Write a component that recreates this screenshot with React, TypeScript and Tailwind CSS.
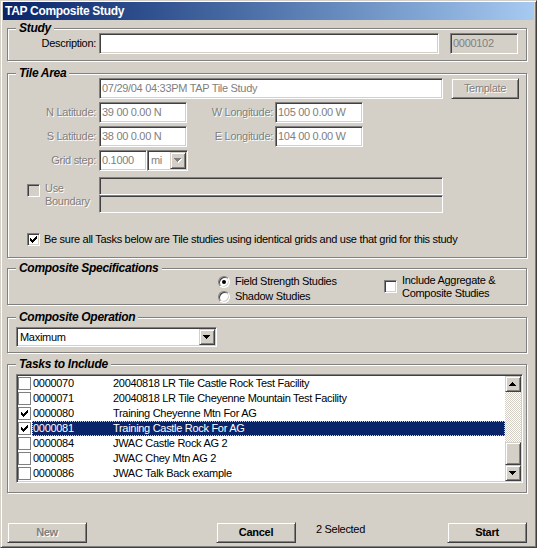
import React from "react";

const SUNKEN =
  "border border-t-[#808080] border-l-[#808080] border-b-white border-r-white shadow-[inset_1px_1px_0_#404040,inset_-1px_-1px_0_#d4d0c8]";
const RAISED =
  "border border-t-[#d4d0c8] border-l-[#d4d0c8] border-b-[#404040] border-r-[#404040] shadow-[inset_1px_1px_0_#ffffff,inset_-1px_-1px_0_#808080] bg-[#d4d0c8]";
const ETCHED =
  "relative border border-[#808080] shadow-[inset_1px_1px_0_#ffffff,1px_1px_0_#ffffff]";
const DIS = "text-[#808080] [text-shadow:1px_1px_0_#ffffff]";

function CheckMark({ color = "#000" }: { color?: string }) {
  return (
    <svg width="7" height="7" viewBox="0 0 7 7" shapeRendering="crispEdges">
      <path
        fill={color}
        d="M0 2h1v3H0zM1 3h1v3H1zM2 4h1v3H2zM3 3h1v3H3zM4 2h1v3H4zM5 1h1v3H5zM6 0h1v3H6z"
      />
    </svg>
  );
}

function Arrow({ up = false, color = "#000", shadow = false }: { up?: boolean; color?: string; shadow?: boolean }) {
  const d = up
    ? "M3 0h1v1H3zM2 1h3v1H2zM1 2h5v1H1zM0 3h7v1H0z"
    : "M0 0h7v1H0zM1 1h5v1H1zM2 2h3v1H2zM3 3h1v1H3z";
  return (
    <svg width="8" height="5" viewBox="0 0 8 5" shapeRendering="crispEdges">
      {shadow && <path fill="#ffffff" d={d} transform="translate(1 1)" />}
      <path fill={color} d={d} />
    </svg>
  );
}

function Check3D({ checked = false, disabled = false }: { checked?: boolean; disabled?: boolean }) {
  return (
    <div
      className={`${SUNKEN} w-[13px] h-[13px] shrink-0 flex items-center justify-center ${
        disabled ? "bg-[#d4d0c8]" : "bg-white"
      }`}
    >
      {checked && <CheckMark />}
    </div>
  );
}

function FlatCheck({ checked = false }: { checked?: boolean }) {
  return (
    <div className="w-[13px] h-[13px] shrink-0 border border-[#808080] bg-white flex items-center justify-center">
      {checked && <CheckMark />}
    </div>
  );
}

function Radio({ checked = false }: { checked?: boolean }) {
  return (
    <div className="w-[12px] h-[12px] shrink-0 rounded-full border border-t-[#808080] border-l-[#808080] border-b-white border-r-white bg-white shadow-[inset_1px_1px_0_#404040,inset_-1px_-1px_0_#d4d0c8] flex items-center justify-center">
      {checked && <div className="w-[4px] h-[4px] rounded-full bg-black" />}
    </div>
  );
}

function Group({
  title,
  className,
  children,
}: {
  title: string;
  className?: string;
  children: React.ReactNode;
}) {
  return (
    <div className={`${ETCHED} ${className ?? ""}`}>
      <span className="absolute left-[8px] -top-[8px] px-[3px] bg-[#d4d0c8] font-bold italic text-[12px] leading-[14px] tracking-[-0.3px] whitespace-nowrap">
        {title}
      </span>
      {children}
    </div>
  );
}

const tasks = [
  { id: "0000070", name: "20040818 LR Tile Castle Rock Test Facility", checked: false, sel: false },
  { id: "0000071", name: "20040818 LR Tile Cheyenne Mountain Test Facility", checked: false, sel: false },
  { id: "0000080", name: "Training Cheyenne Mtn For AG", checked: true, sel: false },
  { id: "0000081", name: "Training Castle Rock For AG", checked: true, sel: true },
  { id: "0000084", name: "JWAC Castle Rock AG 2", checked: false, sel: false },
  { id: "0000085", name: "JWAC Chey Mtn AG 2", checked: false, sel: false },
  { id: "0000086", name: "JWAC Talk Back example", checked: false, sel: false },
];

export default function App() {
  return (
    <div className="w-[537px] h-[548px] bg-[#d4d0c8] border border-t-[#d4d0c8] border-l-[#d4d0c8] border-b-[#404040] border-r-[#404040] shadow-[inset_1px_1px_0_#ffffff,inset_-1px_-1px_0_#808080] pt-[1px] px-[2px] pb-[2px] flex flex-col font-['Liberation_Sans',Arial,sans-serif] text-[11px] leading-[13px] tracking-[-0.3px] text-black overflow-hidden select-none">
      {/* Title bar */}
      <div className="h-[18px] shrink-0 bg-linear-to-r from-[#0a246a] to-[#a6caf0] flex items-center pl-[2px] text-white font-bold text-[12px] tracking-[-0.3px]">
        TAP Composite Study
      </div>

      <div className="flex flex-col pl-[4px] pr-[7px]">
        {/* Study */}
        <Group title="Study" className="mt-[8px] pt-[4px] pb-[6px]">
          <div className="flex items-center h-[21px]">
            <div className="w-[91px] pr-[3px] text-right">Description:</div>
            <div className={`${SUNKEN} bg-white w-[340px] h-[21px]`} />
            <div
              className={`${SUNKEN} bg-[#d4d0c8] w-[68px] h-[21px] ml-[11px] flex items-center pl-[2px] text-[#808080]`}
            >
              0000102
            </div>
          </div>
        </Group>

        {/* Tile Area */}
        <Group title="Tile Area" className="mt-[12px] pt-[4px] pb-[11px]">
          <div className="flex items-center">
            <div
              className={`${SUNKEN} bg-white w-[344px] h-[21px] ml-[91px] flex items-center pl-[2px] text-[#808080]`}
            >
              07/29/04 04:33PM TAP Tile Study
            </div>
            <div className={`${RAISED} w-[68px] h-[21px] ml-[8px] flex items-center justify-center ${DIS}`}>
              Template
            </div>
          </div>

          <div className="flex items-center mt-[3px]">
            <div className={`w-[91px] pr-[3px] text-right ${DIS}`}>N Latitude:</div>
            <div className={`${SUNKEN} bg-white w-[88px] h-[21px] flex items-center pl-[2px] text-[#808080]`}>
              39 00 0.00 N
            </div>
            <div className={`w-[88px] pr-[2px] text-right ${DIS}`}>W Longitude:</div>
            <div className={`${SUNKEN} bg-white w-[88px] h-[21px] flex items-center pl-[2px] text-[#808080]`}>
              105 00 0.00 W
            </div>
          </div>

          <div className="flex items-center mt-[3px]">
            <div className={`w-[91px] pr-[3px] text-right ${DIS}`}>S Latitude:</div>
            <div className={`${SUNKEN} bg-white w-[88px] h-[21px] flex items-center pl-[2px] text-[#808080]`}>
              38 00 0.00 N
            </div>
            <div className={`w-[88px] pr-[2px] text-right ${DIS}`}>E Longitude:</div>
            <div className={`${SUNKEN} bg-white w-[88px] h-[21px] flex items-center pl-[2px] text-[#808080]`}>
              104 00 0.00 W
            </div>
          </div>

          <div className="flex items-center mt-[3px]">
            <div className={`w-[91px] pr-[3px] text-right ${DIS}`}>Grid step:</div>
            <div className={`${SUNKEN} bg-white w-[48px] h-[21px] flex items-center pl-[2px] text-[#808080]`}>
              0.1000
            </div>
            <div className={`${SUNKEN} bg-white w-[41px] h-[21px] p-[1px] flex items-center justify-between`}>
              <span className="pl-[2px] text-[#808080]">mi</span>
              <div className={`${RAISED} w-[16px] h-full flex items-center justify-center`}>
                <Arrow color="#808080" shadow />
              </div>
            </div>
          </div>

          <div className="flex items-start mt-[6px]">
            <div className="w-[91px] flex items-start pl-[19px]">
              <div className="mt-[7px]">
                <Check3D disabled />
              </div>
              <div className={`ml-[5px] mt-[5px] leading-[13px] ${DIS}`}>
                Use
                <br />
                Boundary
              </div>
            </div>
            <div className="flex flex-col">
              <div className={`${SUNKEN} bg-[#d4d0c8] w-[344px] h-[18px]`} />
              <div className={`${SUNKEN} bg-[#d4d0c8] w-[344px] h-[18px]`} />
            </div>
          </div>

          <div className="flex items-center mt-[20px] pl-[19px] h-[13px]">
            <Check3D checked />
            <span className="ml-[4px] whitespace-nowrap">
              Be sure all Tasks below are Tile studies using identical grids and use that grid for this study
            </span>
          </div>
        </Group>

        {/* Composite Specifications */}
        <Group title="Composite Specifications" className="mt-[10px] pt-[5px] pb-0">
          <div className="flex items-start">
            <div className="ml-[210px] w-[166px] flex flex-col">
              <div className="flex items-center h-[15px]">
                <Radio checked />
                <span className="ml-[5px]">Field Strength Studies</span>
              </div>
              <div className="flex items-center h-[15px]">
                <Radio />
                <span className="ml-[5px]">Shadow Studies</span>
              </div>
            </div>
            <div className="flex items-start">
              <div className="mt-[6px]">
                <Check3D />
              </div>
              <div className="ml-[5px] leading-[13px]">
                Include Aggregate &amp;
                <br />
                Composite Studies
              </div>
            </div>
          </div>
        </Group>

        {/* Composite Operation */}
        <Group title="Composite Operation" className="mt-[12px] pt-[9px] pb-[5px]">
          <div className={`${SUNKEN} bg-white ml-[8px] w-[201px] h-[20px] p-[1px] flex items-center justify-between`}>
            <span className="pl-[2px]">Maximum</span>
            <div className={`${RAISED} w-[16px] h-full flex items-center justify-center`}>
              <Arrow />
            </div>
          </div>
        </Group>

        {/* Tasks to Include */}
        <Group title="Tasks to Include" className="mt-[11px] pt-[9px] pb-[9px]">
          <div className={`${SUNKEN} bg-white ml-[8px] w-[507px] h-[109px] p-[1px] flex`}>
            <div className="flex-1 flex flex-col">
              {tasks.map((t) => (
                <div key={t.id} className="flex items-center h-[15px]">
                  <FlatCheck checked={t.checked} />
                  <div
                    className={`ml-[1px] flex-1 h-full flex items-center ${
                      t.sel
                        ? "bg-[#0a246a] text-white border border-dotted border-[#d8d8a8]"
                        : "pl-[1px]"
                    }`}
                  >
                    <span className="w-[80px]">{t.id}</span>
                    <span className="whitespace-nowrap">{t.name}</span>
                  </div>
                </div>
              ))}
            </div>
            <div className="w-[16px] flex flex-col">
              <div className={`${RAISED} h-[16px] flex items-center justify-center`}>
                <Arrow up />
              </div>
              <div className="h-[50px] bg-[image:repeating-conic-gradient(#d4d0c8_0_25%,#ffffff_0_50%)] bg-[length:2px_2px]" />
              <div className={`${RAISED} h-[23px]`} />
              <div className={`${RAISED} h-[16px] flex items-center justify-center`}>
                <Arrow />
              </div>
            </div>
          </div>
        </Group>

        {/* Bottom buttons */}
        <div className="flex items-start mt-[29px]">
          <div className={`${RAISED} w-[80px] h-[21px] flex items-center justify-center font-bold ${DIS}`}>
            New
          </div>
          <div className={`${RAISED} w-[80px] h-[21px] ml-[129px] flex items-center justify-center font-bold`}>
            Cancel
          </div>
          <div className="ml-[20px] mt-[1px]">2 Selected</div>
          <div className={`${RAISED} w-[80px] h-[21px] ml-auto flex items-center justify-center font-bold`}>
            Start
          </div>
        </div>
      </div>
    </div>
  );
}
